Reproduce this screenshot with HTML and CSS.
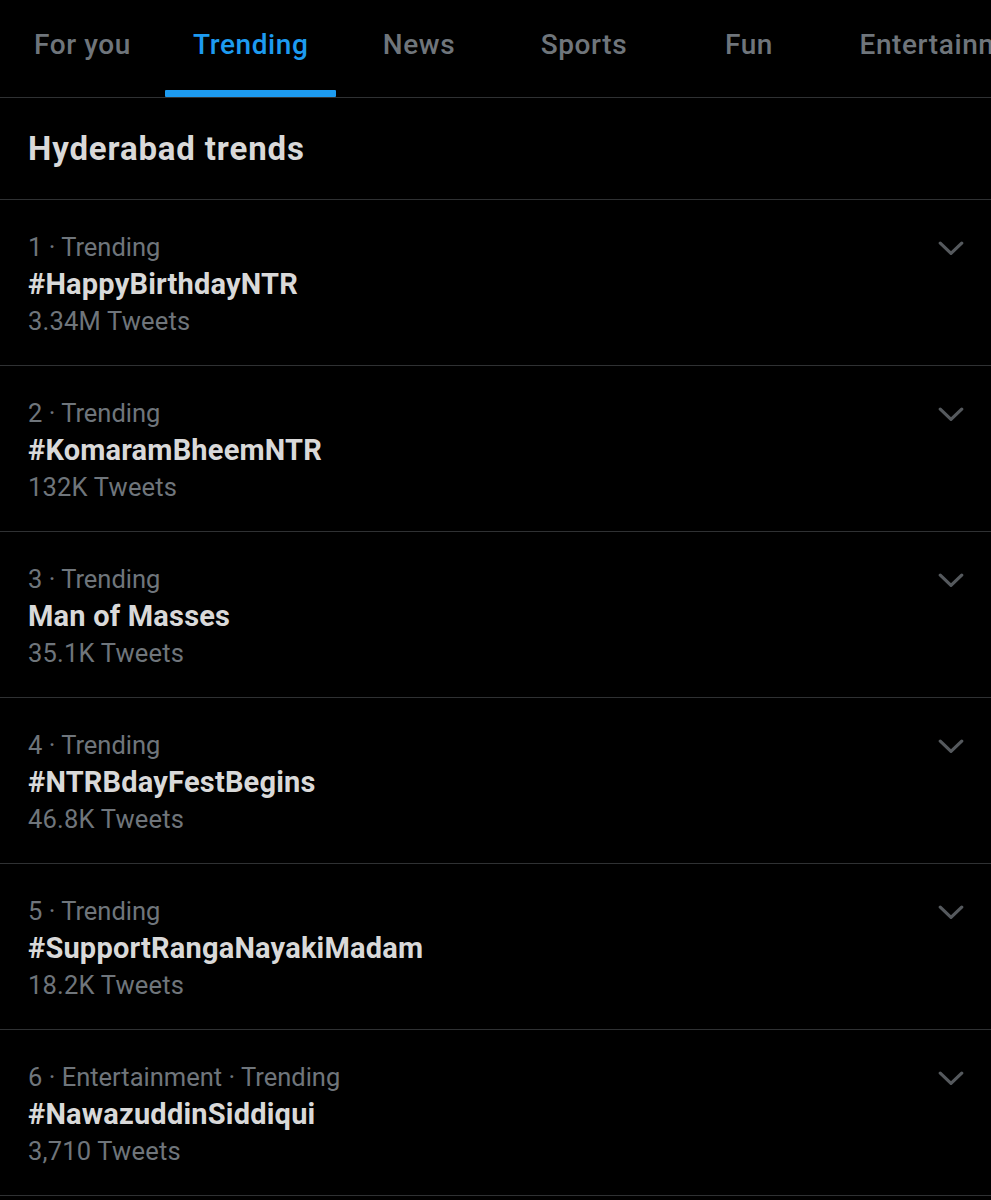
FILE: index.html
```html
<!DOCTYPE html>
<html lang="en">
<head>
<meta charset="utf-8">
<title>Trending</title>
<link rel="stylesheet" href="styles.css">
</head>
<body>
<nav class="tabs">
  <div class="tab">For you</div>
  <div class="tab active">Trending</div>
  <div class="tab">News</div>
  <div class="tab">Sports</div>
  <div class="tab">Fun</div>
  <div class="tab">Entertainment</div>
</nav>
<h1 class="heading">Hyderabad trends</h1>
<main class="list">
  <div class="trend">
    <div class="info">
      <div class="meta">1 · Trending</div>
      <div class="title">#HappyBirthdayNTR</div>
      <div class="count">3.34M Tweets</div>
    </div>
    <svg class="chev" viewBox="0 0 24 14"><path d="M2 2 L12 11.5 L22 2" /></svg>
  </div>
  <div class="trend">
    <div class="info">
      <div class="meta">2 · Trending</div>
      <div class="title">#KomaramBheemNTR</div>
      <div class="count">132K Tweets</div>
    </div>
    <svg class="chev" viewBox="0 0 24 14"><path d="M2 2 L12 11.5 L22 2" /></svg>
  </div>
  <div class="trend">
    <div class="info">
      <div class="meta">3 · Trending</div>
      <div class="title">Man of Masses</div>
      <div class="count">35.1K Tweets</div>
    </div>
    <svg class="chev" viewBox="0 0 24 14"><path d="M2 2 L12 11.5 L22 2" /></svg>
  </div>
  <div class="trend">
    <div class="info">
      <div class="meta">4 · Trending</div>
      <div class="title">#NTRBdayFestBegins</div>
      <div class="count">46.8K Tweets</div>
    </div>
    <svg class="chev" viewBox="0 0 24 14"><path d="M2 2 L12 11.5 L22 2" /></svg>
  </div>
  <div class="trend">
    <div class="info">
      <div class="meta">5 · Trending</div>
      <div class="title">#SupportRangaNayakiMadam</div>
      <div class="count">18.2K Tweets</div>
    </div>
    <svg class="chev" viewBox="0 0 24 14"><path d="M2 2 L12 11.5 L22 2" /></svg>
  </div>
  <div class="trend">
    <div class="info">
      <div class="meta">6 · Entertainment · Trending</div>
      <div class="title">#NawazuddinSiddiqui</div>
      <div class="count">3,710 Tweets</div>
    </div>
    <svg class="chev" viewBox="0 0 24 14"><path d="M2 2 L12 11.5 L22 2" /></svg>
  </div>
</main>
</body>
</html>
```

FILE: styles.css
```css
html, body {
  margin: 0;
  padding: 0;
  background: #000;
}
body {
  font-family: Roboto, "Liberation Sans", Arial, sans-serif;
  color: #d9d9d9;
  width: 991px;
  overflow: hidden;
}
.tabs {
  display: flex;
  height: 97px;
  border-bottom: 1px solid #2f3133;
  white-space: nowrap;
  overflow: hidden;
}
.tab {
  position: relative;
  flex: 0 0 auto;
  box-sizing: border-box;
  min-width: 165px;
  padding: 0 28px 9px;
  display: flex;
  align-items: center;
  justify-content: center;
  font-size: 28px;
  letter-spacing: 0.6px;
  font-weight: 500;
  color: #6f757b;
}
.tab.active {
  color: #1d9bf0;
}
.tab.active::after {
  content: "";
  position: absolute;
  left: 0;
  right: 0;
  bottom: 0;
  height: 7px;
  border-radius: 1px;
  background: #1d9bf0;
}
.heading {
  margin: 0;
  padding: 33px 28px 32px;
  font-size: 33px;
  letter-spacing: 0.85px;
  line-height: 36px;
  font-weight: 700;
  color: #d9d9d9;
  border-bottom: 1px solid #2f3133;
}
.trend {
  display: flex;
  justify-content: space-between;
  align-items: flex-start;
  padding: 29px 27px 25px 28px;
  border-bottom: 1px solid #2f3133;
}
.info {
  display: flex;
  flex-direction: column;
}
.meta, .count {
  font-size: 25.5px;
  line-height: 37px;
  color: #6f757b;
}
.count {
  letter-spacing: 0.2px;
}
.title {
  font-size: 29px;
  letter-spacing: 0.2px;
  line-height: 37px;
  font-weight: 700;
  color: #d9d9d9;
}
.chev {
  width: 26px;
  height: 15px;
  margin-top: 12px;
  fill: none;
  stroke: #55595d;
  stroke-width: 3;
  stroke-linecap: round;
  stroke-linejoin: round;
}
```
